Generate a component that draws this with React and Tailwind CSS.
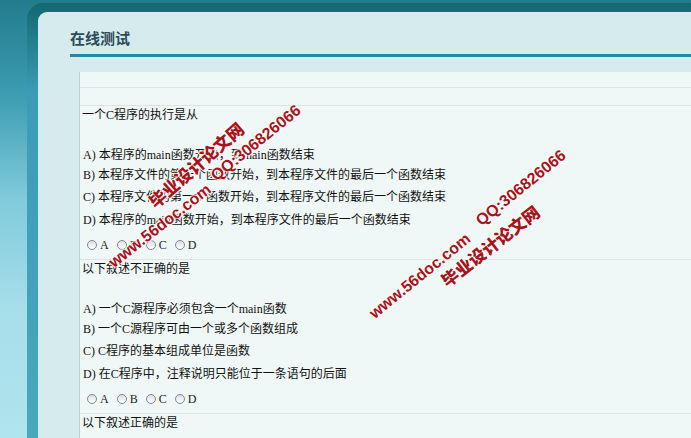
import React from 'react';

const questions = [
  {
    title: '一个C程序的执行是从',
    options: [
      'A) 本程序的main函数开始，到main函数结束',
      'B) 本程序文件的第一个函数开始，到本程序文件的最后一个函数结束',
      'C) 本程序文件的第一个函数开始，到本程序文件的最后一个函数结束',
      'D) 本程序的main函数开始，到本程序文件的最后一个函数结束',
    ],
  },
  {
    title: '以下叙述不正确的是',
    options: [
      'A) 一个C源程序必须包含一个main函数',
      'B) 一个C源程序可由一个或多个函数组成',
      'C) C程序的基本组成单位是函数',
      'D) 在C程序中，注释说明只能位于一条语句的后面',
    ],
  },
];

function Radio({ label }) {
  return (
    <span className="flex items-center mr-[8px]">
      <span className="w-[10px] h-[10px] rounded-full border border-[#7d8891] bg-[linear-gradient(180deg,#dcdfe2,#ffffff)]" />
      <span className="ml-[3px] text-[12px] text-[#222]">{label}</span>
    </span>
  );
}

function Question({ q }) {
  const rowH = ['h-[20px]', 'h-[20px]', 'h-[23px]', 'h-[23px]'];
  return (
    <div className="border-b border-[#dfe5de]">
      <div className="h-[17px] flex items-center pl-[2px]">{q.title}</div>
      <div className="h-[22px]" />
      {q.options.map((o, i) => (
        <div key={i} className={`${rowH[i]} flex items-center pl-[3px]`}>{o}</div>
      ))}
      <div className="h-[28px] flex items-center pl-[7px]">
        {['A', 'B', 'C', 'D'].map((l) => (
          <Radio key={l} label={l} />
        ))}
      </div>
    </div>
  );
}

// red watermark stamped over the screenshot
function Mark({ x, y, angle, size, children }) {
  return (
    <div
      className="absolute -translate-x-1/2 -translate-y-1/2 whitespace-nowrap font-black text-[#a8131b] [text-shadow:0_0_2px_#fff,0_0_2px_#fff,1px_1px_1px_#fff,-1px_-1px_1px_#fff] leading-none"
      style={{
        left: x,
        top: y,
        rotate: `${angle}deg`,
        fontSize: size,
        fontFamily: '"Liberation Sans", "Noto Sans CJK SC", sans-serif',
      }}
    >
      {children}
    </div>
  );
}

export default function App() {
  return (
    <div className="relative h-[438px] w-full overflow-hidden bg-[linear-gradient(180deg,#227c8c_0%,#3d9db3_22%,#7fcadb_45%,#a6deea_70%,#b0e4ee_100%)] pl-[27px] pt-[3px] flex flex-col">
      <div className="flex-1 rounded-tl-[16px] bg-[linear-gradient(180deg,#136871_0px,#1f7a88_30px,#3c9cb5_90px,#4aa8c0_100%)] pl-[11px] pt-[9px] flex flex-col">
        <div
          className="flex-1 rounded-tl-[9px] bg-[#d6ebee] pl-[32px] pt-[18px]"
          style={{ fontFamily: '"Liberation Serif", "Noto Sans CJK SC", serif' }}
        >
          <div
            className="h-[15px] leading-[15px] text-[15px] font-bold text-[#2c4c58]"
            style={{ fontFamily: '"Noto Sans CJK SC", sans-serif' }}
          >
            在线测试
          </div>
          <div className="mt-[9px] h-[3px] bg-[#2588a5]" />
          <div className="mt-[15px] ml-[9px] border-l border-[#bccfd3] bg-[#f0f8f7] text-[12px] text-[#111] h-[400px]">
            <div className="h-[16px] border-b border-[#dfe5de]" />
            <div className="h-[18px] border-b border-[#dfe5de]" />
            {questions.map((q, i) => (
              <Question key={i} q={q} />
            ))}
            <div className="h-[17px] flex items-center pl-[2px]">以下叙述正确的是</div>
          </div>
        </div>
      </div>

      <Mark x={160} y={226} angle={-38} size={16}>www.56doc.com</Mark>
      <Mark x={197} y={166} angle={-41} size={17}>毕业设计论文网</Mark>
      <Mark x={256} y={143} angle={-39} size={16}>QQ:306826066</Mark>

      <Mark x={420} y={276} angle={-39} size={16}>www.56doc.com</Mark>
      <Mark x={491} y={247} angle={-38} size={17}>毕业设计论文网</Mark>
      <Mark x={521} y={188} angle={-39} size={16}>QQ:306826066</Mark>
    </div>
  );
}
